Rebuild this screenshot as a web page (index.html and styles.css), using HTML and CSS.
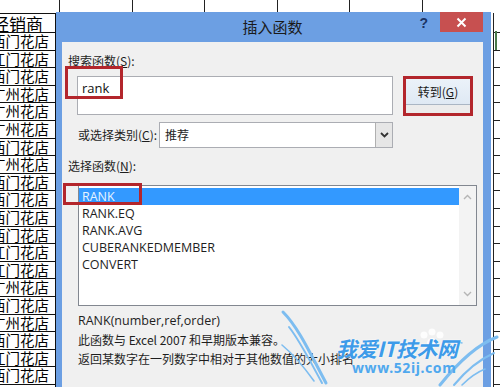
FILE: index.html
```html
<!DOCTYPE html>
<html>
<head>
<meta charset="utf-8">
<link rel="stylesheet" href="styles.css">
</head>
<body>
<div class="screen">
  <div class="sheet">
    <div class="toprow">
      <div class="tc w60"></div><div class="tc w73"></div><div class="tc w72"></div><div class="tc w73"></div><div class="tc w72"></div><div class="tc w73"></div><div class="tc wrest"></div>
    </div>
    <div class="sheetmain">
      <div class="namecol">
        <div class="cell head"><span>经销商</span></div>
        <div class="cell"><span>西门花店</span></div>
        <div class="cell"><span>江门花店</span></div>
        <div class="cell"><span>西门花店</span></div>
        <div class="cell"><span>广州花店</span></div>
        <div class="cell"><span>广州花店</span></div>
        <div class="cell"><span>广州花店</span></div>
        <div class="cell"><span>西门花店</span></div>
        <div class="cell"><span>广州花店</span></div>
        <div class="cell"><span>西门花店</span></div>
        <div class="cell"><span>西门花店</span></div>
        <div class="cell"><span>西门花店</span></div>
        <div class="cell"><span>西门花店</span></div>
        <div class="cell"><span>江门花店</span></div>
        <div class="cell"><span>江门花店</span></div>
        <div class="cell"><span>广州花店</span></div>
        <div class="cell"><span>西门花店</span></div>
        <div class="cell"><span>广州花店</span></div>
        <div class="cell"><span>西门花店</span></div>
        <div class="cell"><span>江门花店</span></div>
        <div class="cell"><span>西门花店</span></div>
      </div>
      <div class="blank"></div>
      <div class="rightcol">
        <div class="rc first"><span class="sel"></span></div>
        <div class="rc"></div><div class="rc"></div><div class="rc"></div><div class="rc"></div><div class="rc"></div>
        <div class="rc"></div><div class="rc"></div><div class="rc"></div><div class="rc"></div><div class="rc"></div>
        <div class="rc"></div><div class="rc"></div><div class="rc"></div><div class="rc"></div><div class="rc"></div>
        <div class="rc"></div><div class="rc"></div><div class="rc"></div><div class="rc"></div><div class="rc"></div>
      </div>
    </div>
  </div>

  <div class="dialog">
    <div class="titlebar">
      <div class="tb-side"></div>
      <div class="title">插入函数</div>
      <div class="tb-side right">
        <span class="help">?</span>
        <span class="close"><svg width="11" height="11" viewBox="0 0 11 11"><path d="M1.5 1.5L9.5 9.5M9.5 1.5L1.5 9.5" stroke="#fff" stroke-width="2" fill="none"/></svg></span>
      </div>
    </div>
    <div class="body">
      <div class="label">搜索函数(<u>S</u>):</div>
      <div class="search-row">
        <div class="searchbox">rank</div>
        <div class="gobox">
          <div class="gobtn">转到(<u>G</u>)</div>
        </div>
      </div>
      <div class="cat-row">
        <div class="cat-label">或选择类别(<u>C</u>):</div>
        <div class="select">
          <span class="sel-text">推荐</span>
          <span class="dd"><svg width="9" height="6" viewBox="0 0 9 6"><path d="M1 1L4.5 4.5L8 1" stroke="#333" stroke-width="1.8" fill="none"/></svg></span>
        </div>
      </div>
      <div class="label label2">选择函数(<u>N</u>):</div>
      <div class="listbox">
        <div class="items">
          <div class="item selected">RANK</div>
          <div class="item">RANK.EQ</div>
          <div class="item">RANK.AVG</div>
          <div class="item">CUBERANKEDMEMBER</div>
          <div class="item">CONVERT</div>
        </div>
        <div class="scrollbar">
          <svg width="9" height="6" viewBox="0 0 9 6"><path d="M1 5L4.5 1.5L8 5" stroke="#b5b5b5" stroke-width="1.4" fill="none"/></svg>
          <svg width="9" height="6" viewBox="0 0 9 6"><path d="M1 1L4.5 4.5L8 1" stroke="#b5b5b5" stroke-width="1.4" fill="none"/></svg>
        </div>
      </div>
      <div class="desc">
        <div class="sig">RANK(number,ref,order)</div>
        <div>此函数与 Excel 2007 和早期版本兼容。</div>
        <div>返回某数字在一列数字中相对于其他数值的大小排名</div>
      </div>
      <div class="hl hl-rank"></div>
      <div class="hl hl-RANK"></div>
    </div>
  </div>

  <div class="watermark">
    <svg class="wings" width="220" height="82" viewBox="0 0 220 82">
      <g fill="none" stroke="#7dbdf0" stroke-linecap="round">
        <path d="M3 7 C 18 22, 30 48, 46 78" stroke-width="3"/>
        <path d="M9 22 C 20 36, 30 56, 42 78" stroke-width="2"/>
        <path d="M2 40 C 14 50, 24 62, 34 76" stroke-width="1.6"/>
        <path d="M217 32 C 196 40, 176 60, 160 80" stroke-width="3"/>
        <path d="M214 48 C 196 56, 184 68, 174 80" stroke-width="2"/>
        <path d="M205 64 C 195 68, 188 74, 182 80" stroke-width="1.6"/>
        <path d="M168 38 C 172 36, 178 36, 182 38" stroke-width="1.4"/>
      </g>
      <g fill="#ffffff" opacity="0.9">
        <circle cx="144" cy="30" r="3.5"/>
        <circle cx="152" cy="27" r="3.5"/>
        <circle cx="160" cy="30" r="3.5"/>
        <circle cx="152" cy="38" r="5"/>
      </g>
    </svg>
    <div class="wm-title">我爱IT技术网</div>
    <div class="wm-url">www.52ij.com</div>
  </div>
</div>
</body>
</html>
```

FILE: styles.css
```css
* { box-sizing: border-box; margin: 0; padding: 0; }
html, body { width: 500px; height: 387px; overflow: hidden; background: #fff; }
body { font-family: "Noto Sans CJK SC", "Noto Sans", sans-serif; }

.screen { position: relative; width: 500px; height: 387px; overflow: hidden; background: #fff; }

/* spreadsheet background */
.sheet { display: flex; flex-direction: column; height: 387px; }
.toprow { display: flex; height: 13px; flex: none; }
.tc { height: 13px; border-right: 1px solid #222; }
.w60 { width: 60px; }
.w72 { width: 72px; }
.w73 { width: 73px; }
.wrest { flex: 1; border-right: none; }

.sheetmain { display: flex; flex: 1; min-height: 0; }
.namecol {
  width: 56px;
  border-right: 1.5px solid #111;
  border-top: 1.5px solid #111;
  display: flex; flex-direction: column;
  flex: none;
}
.cell {
  height: 17.6px;
  flex: none;
  border-bottom: 1.6px solid #111;
  display: flex; justify-content: flex-end; align-items: center;
  overflow: hidden; white-space: nowrap;
  font-size: 14.5px; line-height: 1;
  color: #000;
  padding-right: 6px;
}
.cell.head { height: 19px; font-size: 17px; padding-right: 12px; }
.blank { flex: 1; }
.rightcol { width: 7px; border-left: 1px solid #222; display: flex; flex-direction: column; flex: none; }
.rc { height: 17.6px; border-bottom: 1px solid #222; flex: none; position: relative; }
.rc.first { height: 20px; }
.sel { position: absolute; left: 1px; top: 18px; width: 2px; height: 20px; background: #4a7a4a; }

/* dialog */
.dialog {
  position: absolute; left: 56px; top: 12px;
  width: 435px; height: 380px;
  background: #6c9fe3;
  padding: 0 8px 0 6px;
  display: flex; flex-direction: column;
}
.titlebar { height: 30px; flex: none; display: flex; align-items: flex-start; }
.tb-side { flex: 1; display: flex; align-items: flex-start; }
.tb-side.right { justify-content: flex-end; }
.title { font-size: 15px; line-height: 29px; color: #1a1a1a; }
.help { font: bold 14px/20px "Liberation Sans", sans-serif; color: #1b3466; margin-right: 12px; margin-top: 1px; }
.close { width: 43px; height: 20px; background: #c75050; display: flex; align-items: center; justify-content: center; }

.body {
  flex: 1; position: relative;
  background: #f0f0f0;
  padding: 12px 0 0 6px;
  font-size: 12px; color: #1e1e1e;
}
.label { line-height: 14px; }
.label u, .cat-label u, .gobtn u { text-decoration: underline; }

.search-row { display: flex; gap: 10px; margin-top: 8px; margin-left: 9px; }
.searchbox {
  width: 316px; height: 39px;
  background: #fff; border: 1px solid #abadb3;
  padding: 3px 0 0 4px;
  font: 13px/17px "Open Sans", "Noto Sans", sans-serif; color: #111;
}
.gobox {
  width: 70px; height: 40px;
  border: 3px solid #b3262c;
  background: #ececec;
}
.gobtn {
  height: 26px;
  background: linear-gradient(#ebf2f9, #dfe9f4);
  border-bottom: 1px solid #aab6c4;
  display: flex; align-items: center; justify-content: center;
  font-size: 12px; color: #1a1a1a;
}

.cat-row { display: flex; align-items: center; margin-top: 6px; margin-left: 10px; }
.cat-label { width: 81px; line-height: 14px; }
.select {
  width: 234px; height: 26px;
  background: #fff; border: 1px solid #abadb3;
  display: flex; align-items: stretch;
}
.sel-text { flex: 1; padding-left: 5px; line-height: 24px; }
.dd { width: 17px; background: #e6e6e6; border-left: 1px solid #b0b0b0; display: flex; align-items: center; justify-content: center; }

.label2 { margin-top: 11px; }

.listbox {
  margin-top: 12px; margin-left: 10px;
  width: 399px; height: 121px;
  background: #fff; border: 1px solid #828790;
  display: flex;
}
.items { flex: 1; padding-top: 2px; font: 12.5px "Open Sans", "Noto Sans", sans-serif; color: #1e1e1e; }
.item { height: 17px; line-height: 17px; padding-left: 3px; }
.item.selected { background: #3399ff; color: #e6f4ff; }
.scrollbar {
  width: 17px; background: #f3f3f3;
  display: flex; flex-direction: column; justify-content: space-between; align-items: center;
  padding: 8px 0 8px;
}

.desc { margin-top: 5px; margin-left: 10px; line-height: 19px; font-size: 12px; }
.sig { font-family: "Open Sans", "Noto Sans", sans-serif; font-size: 12.5px; }

.hl { position: absolute; border: 3px solid #b3262c; }
.hl-rank { left: 3px; top: 24px; width: 58px; height: 33px; }
.hl-RANK { left: 1px; top: 141px; width: 79px; height: 22px; }

/* watermark */
.watermark {
  position: absolute; left: 280px; top: 305px; width: 220px; height: 82px;
  padding: 31px 0 0 56px;
}
.wings { position: absolute; left: 0; top: 0; }
.wm-title {
  position: relative;
  font: italic bold 21px/24px "Noto Sans CJK SC", sans-serif;
  color: #3d9be9;
  letter-spacing: -0.5px;
  text-shadow: 0 0 2px #fff;
}
.wm-url {
  position: relative;
  margin-left: 16px;
  font: bold 14px/16px "Noto Sans", sans-serif;
  color: #4fa8ee;
  letter-spacing: 0.6px;
}
```
